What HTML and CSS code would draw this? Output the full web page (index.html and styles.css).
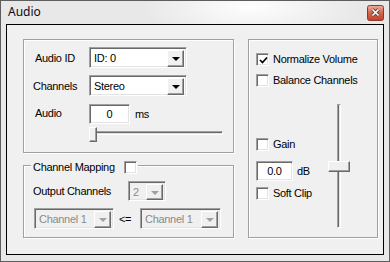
FILE: index.html
```html
<!DOCTYPE html>
<html lang="en">
<head>
    <meta charset="UTF-8">
    <meta name="viewport" content="width=device-width, initial-scale=1.0">
    <title>Audio</title>
    <link rel="stylesheet" href="styles.css">
</head>
<body>
    <div class="window">
        <div class="titlebar">
            <span class="title">Audio</span>
            <div class="close">
                <svg width="17" height="16" viewBox="0 0 17 16">
                    <defs>
                        <linearGradient id="closeGrad" x1="0" y1="0" x2="0" y2="1">
                            <stop offset="0" stop-color="#eab0a2"/>
                            <stop offset="0.45" stop-color="#d66a52"/>
                            <stop offset="1" stop-color="#c2412a"/>
                        </linearGradient>
                    </defs>
                    <rect x="0.5" y="0.5" width="16" height="15" rx="2" fill="url(#closeGrad)" stroke="#8a3a2c"/>
                    <path d="M5.5 4.5 L11.5 10.5 M11.5 4.5 L5.5 10.5" stroke="#55443f" stroke-width="3.2"/>
                    <path d="M5.5 4.5 L11.5 10.5 M11.5 4.5 L5.5 10.5" stroke="#ffffff" stroke-width="1.6"/>
                </svg>
            </div>
        </div>

        <div class="client">
            <div class="col">
                <!-- audio stream -->
                <div class="group group-audio">
                    <div class="row">
                        <span class="label">Audio ID</span>
                        <div class="combo sunken combo-id">
                            <span class="combo-text">ID: 0</span>
                            <span class="combo-btn raised"><i class="arrow"></i></span>
                        </div>
                    </div>
                    <div class="row row-channels">
                        <span class="label label-wide">Channels</span>
                        <div class="combo sunken combo-id">
                            <span class="combo-text">Stereo</span>
                            <span class="combo-btn raised"><i class="arrow"></i></span>
                        </div>
                    </div>
                    <div class="row row-delay">
                        <span class="label label-delay">Audio</span>
                        <div class="edit sunken edit-delay">0</div>
                        <span class="unit">ms</span>
                    </div>
                    <div class="hslider">
                        <div class="track-h"></div>
                        <div class="thumb-h raised"></div>
                    </div>
                </div>

                <!-- channel mapping -->
                <div class="group group-map">
                    <div class="legend">
                        <span>Channel Mapping</span>
                        <span class="checkbox sunken"></span>
                    </div>
                    <div class="row">
                        <span class="label label-output">Output Channels</span>
                        <div class="combo sunken disabled combo-num">
                            <span class="combo-text">2</span>
                            <span class="combo-btn raised"><i class="arrow"></i></span>
                        </div>
                    </div>
                    <div class="row row-map">
                        <div class="combo sunken disabled combo-ch">
                            <span class="combo-text">Channel 1</span>
                            <span class="combo-btn raised"><i class="arrow"></i></span>
                        </div>
                        <span class="assign">&lt;=</span>
                        <div class="combo sunken disabled combo-ch combo-ch2">
                            <span class="combo-text">Channel 1</span>
                            <span class="combo-btn raised"><i class="arrow"></i></span>
                        </div>
                    </div>
                </div>
            </div>

            <!-- volume -->
            <div class="group group-volume">
                <div class="check-row">
                    <span class="checkbox sunken">
                        <svg width="9" height="9" viewBox="0 0 9 9"><path d="M1 4 L3.5 6.5 L8 1.5" fill="none" stroke="#000" stroke-width="1.7"/></svg>
                    </span>
                    <span>Normalize Volume</span>
                </div>
                <div class="check-row row-balance">
                    <span class="checkbox sunken"></span>
                    <span>Balance Channels</span>
                </div>
                <div class="lower">
                    <div class="lower-left">
                        <div class="check-row">
                            <span class="checkbox sunken"></span>
                            <span>Gain</span>
                        </div>
                        <div class="row row-gain">
                            <div class="edit sunken edit-gain">0.0</div>
                            <span class="unit unit-db">dB</span>
                        </div>
                        <div class="check-row row-soft">
                            <span class="checkbox sunken"></span>
                            <span>Soft Clip</span>
                        </div>
                    </div>
                    <div class="vslider">
                        <div class="track-v"></div>
                        <div class="thumb-v raised"></div>
                    </div>
                </div>
            </div>
        </div>
    </div>
</body>
</html>
```

FILE: styles.css
```css
* {
    box-sizing: border-box;
}
body {
    margin: 0;
    font-family: "Liberation Sans", Arial, sans-serif;
    font-size: 11px;
    letter-spacing: -0.3px;
    color: #000;
}
.window {
    width: 390px;
    height: 262px;
    border: 1px solid #5d5d5d;
    padding: 0 5px 6px 5px;
    display: flex;
    flex-direction: column;
    background: radial-gradient(ellipse 110px 34px at 250px 6px, rgba(255, 255, 255, 0.95), rgba(255, 255, 255, 0)), #e8e8e8;
}
.titlebar {
    height: 23px;
    display: flex;
    justify-content: space-between;
    align-items: flex-start;
    padding-left: 2px;
}
.title {
    font-family: "Noto Sans", sans-serif;
    font-size: 12px;
    line-height: 16px;
    padding-top: 3px;
    letter-spacing: 0;
    color: #0a0a1a;
}
.close {
    margin-top: 4px;
    width: 17px;
    height: 16px;
}
.close svg {
    display: block;
}
.client {
    height: 231px;
    border: 1px solid #000;
    background-color: #f0f0f0;
    padding: 14px 0 0 16px;
    display: flex;
    align-items: flex-start;
    gap: 14px;
}
.col {
    display: flex;
    flex-direction: column;
    gap: 12px;
}

/* etched group boxes */
.group {
    border: 1px solid #a0a0a0;
    box-shadow: inset 1px 1px #fff, 1px 1px #fff;
}
.group-audio {
    width: 211px;
    height: 114px;
    padding: 7px 0 0 11px;
}
.group-map {
    width: 211px;
    height: 73px;
    padding: 15px 0 0 9px;
    position: relative;
}
.group-volume {
    width: 130px;
    height: 199px;
    padding: 13px 0 0 7px;
}

/* 3d edges */
.sunken {
    border: 1px solid;
    border-color: #a0a0a0 #fff #fff #a0a0a0;
    box-shadow: inset 1px 1px #696969, inset -1px -1px #e3e3e3;
    background-color: #fff;
}
.raised {
    border: 1px solid;
    border-color: #fff #696969 #696969 #fff;
    box-shadow: inset -1px -1px #a0a0a0;
    background-color: #f0f0f0;
}

.row {
    display: flex;
    align-items: center;
}
.label {
    width: 54px;
    line-height: 13px;
    padding-top: 1px;
}
.label-wide {
    width: 56px;
    margin-left: -2px;
}
.row-channels {
    margin-top: 7px;
}
.row-delay {
    margin-top: 8px;
    align-items: flex-start;
}
.label-delay {
    margin-top: 3px;
    padding-top: 0;
}

/* combo boxes */
.combo {
    height: 21px;
    display: flex;
    padding: 2px;
}
.combo-text {
    flex: 1;
    line-height: 17px;
    padding-left: 2px;
    white-space: nowrap;
    overflow: hidden;
}
.combo-btn {
    width: 17px;
    height: 17px;
    display: flex;
    align-items: center;
    justify-content: center;
}
.arrow {
    width: 0;
    height: 0;
    border-top: 4px solid #000;
    border-left: 4px solid transparent;
    border-right: 4px solid transparent;
    margin-top: 1px;
}
.combo-id {
    width: 98px;
}
.combo.disabled {
    background-color: #f0f0f0;
    color: #8a8a8a;
}
.combo.disabled .arrow {
    border-top-color: #a0a0a0;
}
.combo-num {
    width: 38px;
    height: 20px;
}
.combo-num .combo-btn {
    height: 16px;
}
.combo-ch {
    width: 80px;
    margin-left: 1px;
}
.combo-ch2 {
    width: 81px;
    margin-left: 6px;
}
.assign {
    width: 15px;
    margin-left: 5px;
    padding-top: 1px;
}

/* edits */
.edit {
    height: 20px;
    padding: 1px 2px;
    line-height: 16px;
    text-align: center;
}
.edit-delay {
    width: 41px;
}
.edit-gain {
    width: 37px;
}
.unit {
    margin-left: 5px;
    line-height: 20px;
}
.unit-db {
    margin-left: 4px;
}

/* horizontal trackbar */
.hslider {
    position: relative;
    margin: 3px 0 0 54px;
    width: 134px;
    height: 15px;
}
.track-h {
    position: absolute;
    left: 0;
    right: 0;
    top: 4px;
    height: 4px;
    border: 1px solid;
    border-color: #a0a0a0 #fff #fff #a0a0a0;
    background-color: #e3e3e3;
    box-shadow: inset 0 1px #696969;
}
.thumb-h {
    position: absolute;
    left: 0;
    top: 0;
    width: 8px;
    height: 15px;
}

/* channel mapping legend */
.legend {
    position: absolute;
    top: -5px;
    left: 7px;
    display: flex;
    align-items: center;
    gap: 9px;
    line-height: 13px;
    padding: 0 1px 0 2px;
    background-color: #f0f0f0;
}
.label-output {
    width: 95px;
    padding-top: 1px;
}
.row-map {
    margin-top: 7px;
}

/* checkboxes */
.checkbox {
    width: 13px;
    height: 13px;
    padding: 1px;
    flex: none;
}
.checkbox svg {
    display: block;
    margin: 1px 0 0 1px;
}
.check-row {
    display: flex;
    align-items: center;
    gap: 4px;
    line-height: 13px;
}
.row-balance {
    margin-top: 8px;
}
.lower {
    display: flex;
    margin-top: 17px;
}
.lower-left {
    width: 72px;
    padding-top: 34px;
}
.row-gain {
    margin-top: 10px;
}
.row-soft {
    margin-top: 6px;
}

/* vertical trackbar */
.vslider {
    position: relative;
    width: 22px;
    height: 124px;
}
.track-v {
    position: absolute;
    left: 9px;
    top: 0;
    bottom: 0;
    width: 4px;
    border: 1px solid;
    border-color: #a0a0a0 #fff #fff #a0a0a0;
    background-color: #e3e3e3;
    box-shadow: inset 1px 0 #696969;
}
.thumb-v {
    position: absolute;
    left: 0;
    top: 57px;
    width: 22px;
    height: 11px;
}
```
